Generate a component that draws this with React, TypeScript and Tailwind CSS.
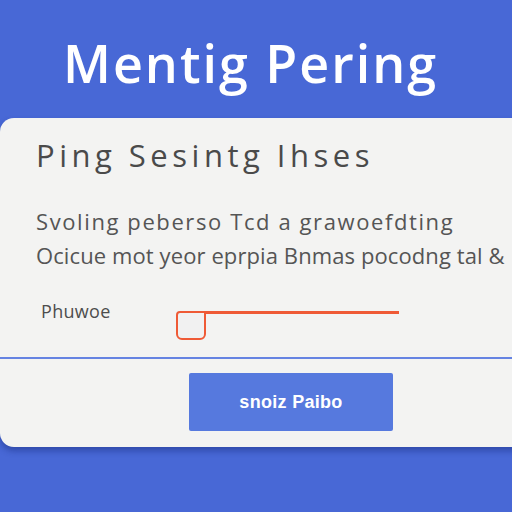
import React from 'react';

const App = () => {
  return (
    <div className="w-[512px] h-[512px] overflow-hidden bg-[#4868d6] font-['Open_Sans',sans-serif]">
      <h1 className="pt-[37px] pr-[11px] text-center text-[52px] leading-[52px] font-semibold text-white tracking-[2px]">
        Mentig Pering
      </h1>

      <div className="mt-[29px] w-[560px] h-[329px] rounded-[14px] bg-[#f3f3f2] shadow-[0_4px_6px_rgba(20,40,120,0.45)] flex flex-col">
        <div className="pl-[36px] pt-[21px] h-[239px]">
          <h2 className="text-[31px] leading-[32px] font-medium text-[#4a4a4a] tracking-[4.5px]">Ping Sesintg Ihses</h2>
          <div className="mt-[33px] text-[22px] leading-[34px] font-medium text-[#555555] whitespace-nowrap">
            <p className="tracking-[1.6px]">Svoling peberso Tcd a grawoefdting</p>
            <p className="tracking-[0.1px]">Ocicue mot yeor eprpia Bnmas pocodng tal &amp;</p>
          </div>
          <div className="mt-[39px] flex items-start">
            <span className="mt-[-12px] ml-[5px] w-[135px] text-[18px] leading-[24px] font-medium text-[#4d4d4d] tracking-[0.3px]">
              Phuwoe
            </span>
            <div className="flex items-start">
              <div className="w-[30px] h-[29px] border-2 border-[#ef5a36] rounded-b-[6px] rounded-tl-[4px] bg-[#f1f1f1]" />
              <div className="w-[193px] h-[3px] bg-[#ef5a36]" />
            </div>
          </div>
        </div>
        <div className="h-[2px] bg-[#6583e2]" />
        <div className="pl-[189px] pt-[14px]">
          <button className="w-[204px] h-[58px] bg-[#5679de] rounded-[2px] text-white text-[18px] font-bold font-['Liberation_Sans',sans-serif] tracking-[0.3px]">
            snoiz Paibo
          </button>
        </div>
      </div>
    </div>
  );
};

export default App;
